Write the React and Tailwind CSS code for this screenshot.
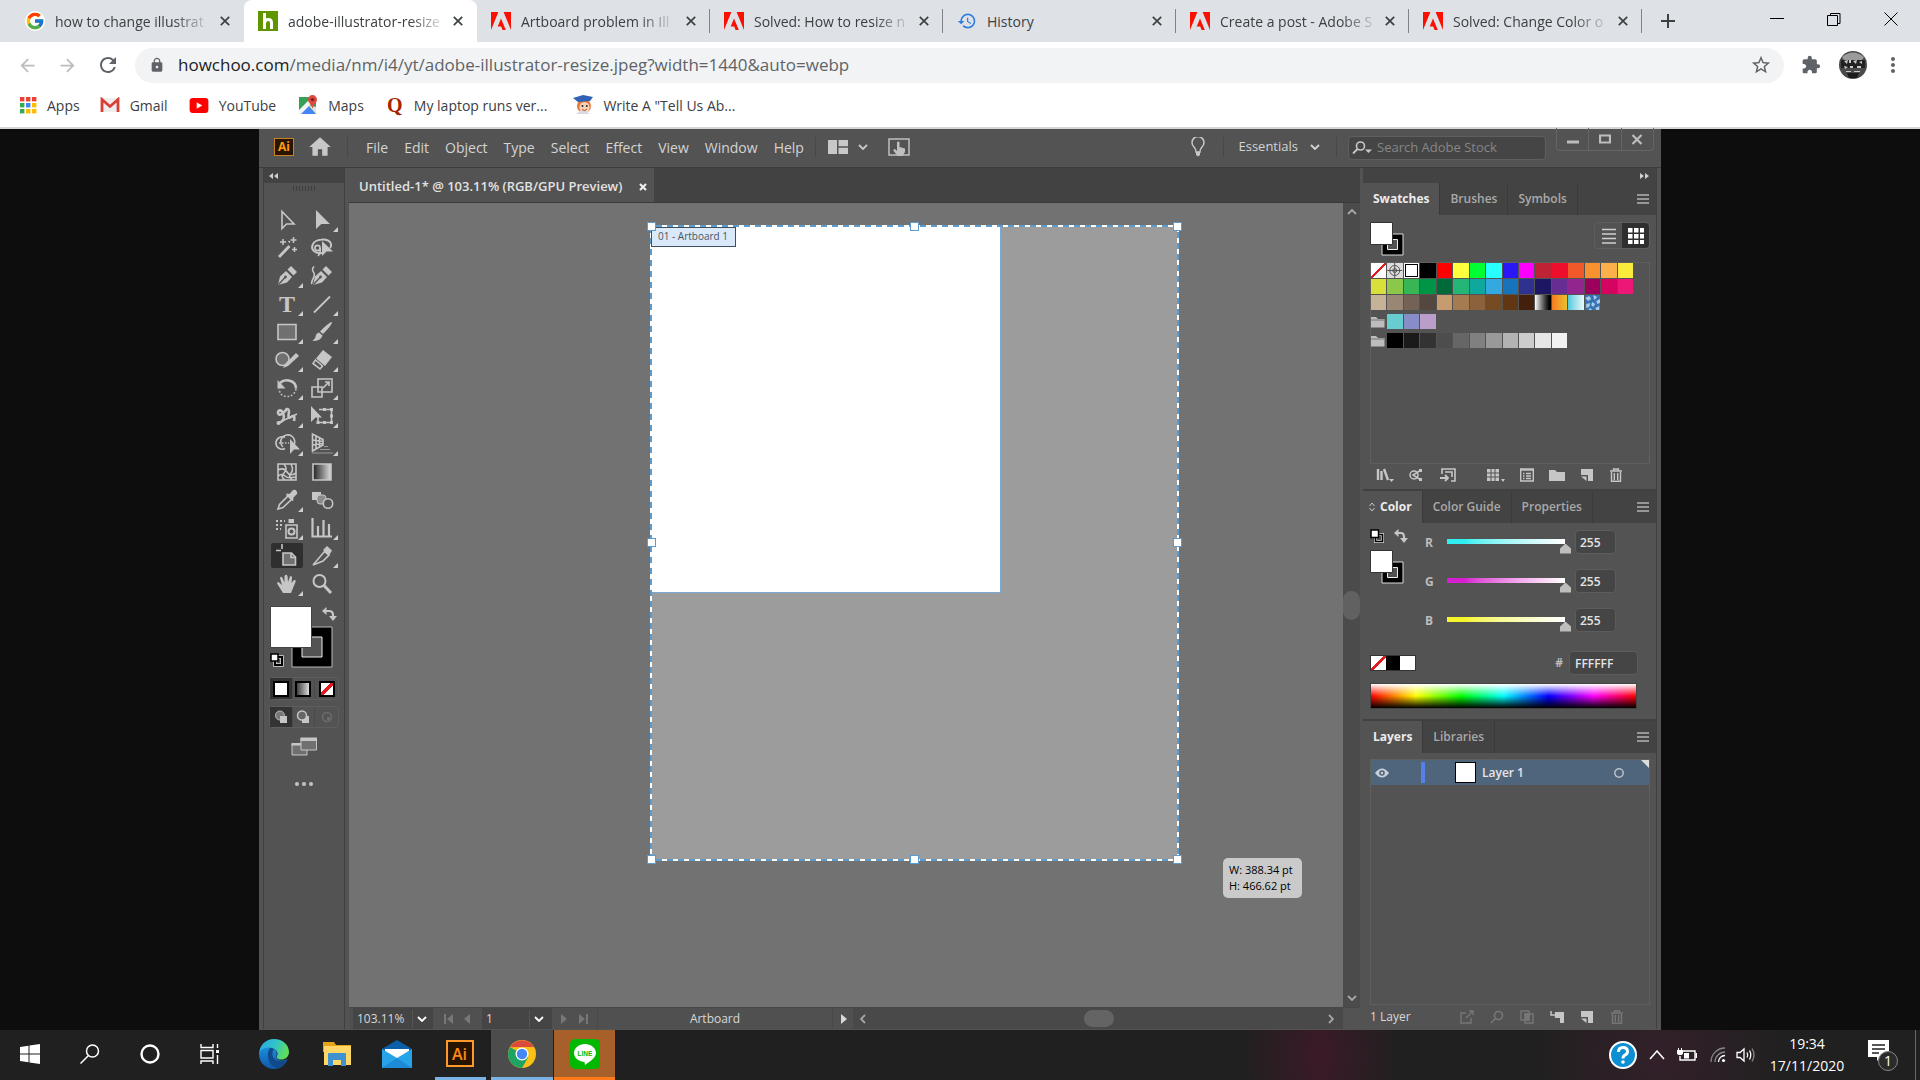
import React, { useState } from 'react';
import { FcGoogle } from 'react-icons/fc';
import { MdArrowBack, MdArrowForward, MdRefresh, MdLock, MdStarBorder, MdExtension, MdMoreVert, MdHistory, MdHome } from 'react-icons/md';

const AdobeLogo = () => (
  <svg viewBox="0 0 20 18" className="w-5 h-[18px] shrink-0">
    <path fill="#fa0f00" d="M0 0H7.4L0 18ZM12.6 0H20V18ZM10 6.6L14.8 18H11.6L10.2 14.4H6.7Z" />
  </svg>
);

const HowchooLogo = () => (
  <svg viewBox="0 0 20 20" className="w-5 h-5 shrink-0">
    <path d="M0 0H20V20H0Z" fill="#5f9500" />
    <path d="M6.500 2V18M6.500 12Q7 8.500 10.500 8.500Q13.500 8.500 13.500 12V18" fill="none" stroke="#fff" strokeWidth="3" />
  </svg>
);

const tabs = [
  { title: 'how to change illustrat', icon: <FcGoogle className="w-5 h-5 shrink-0 rounded-full bg-white" /> },
  { title: 'adobe-illustrator-resize', icon: <HowchooLogo />, active: true },
  { title: 'Artboard problem in Ill', icon: <AdobeLogo /> },
  { title: 'Solved: How to resize n', icon: <AdobeLogo /> },
  { title: 'History', icon: <MdHistory className="w-5 h-5 shrink-0 text-[#2f7de1]" />, short: true },
  { title: 'Create a post - Adobe S', icon: <AdobeLogo /> },
  { title: 'Solved: Change Color o', icon: <AdobeLogo /> },
];

const Cross = ({ className }) => (
  <svg viewBox="0 0 10 10" className={className}>
    <path d="M0.8 0.8L9.2 9.2M9.2 0.8L0.8 9.2" stroke="currentColor" strokeWidth="1.7" fill="none" />
  </svg>
);

const TabStrip = () => (
  <div className="flex h-[42px] bg-[#dee1e6] pl-[11px]">
    {tabs.map((tab, i) => (
      <div key={tab.title} className={`flex items-center justify-between w-[233px] pl-[14px] ${i > 1 ? '' : 'pr-[14px]'} ${tab.active ? 'bg-white rounded-t-lg' : ''}`}>
        <div className="flex items-center gap-[10px]">
          {tab.icon}
          <span className={`text-[14px] whitespace-nowrap text-[#3c4043] ${tab.short ? '' : '[mask-image:linear-gradient(to_right,black_80%,#0003)]'}`}>{tab.title}</span>
        </div>
        <div className="flex items-center gap-[13px]">
          <button aria-label="Close tab" className="text-[#3c4043]"><Cross className="w-[10px] h-[10px]" /></button>
          {i > 1 && <span className="w-px h-6 bg-[#80838a]" />}
        </div>
      </div>
    ))}
    <button aria-label="New tab" className="ml-[18px] text-[#3c4043]">
      <svg viewBox="0 0 16 16" className="w-4 h-4"><path d="M8 1V15M1 8H15" stroke="currentColor" strokeWidth="2" /></svg>
    </button>
    <div className="ml-auto mr-[22px] mb-1 flex items-center gap-[43px] text-black">
      <button aria-label="Minimize"><svg viewBox="0 0 14 14" className="w-[14px] h-[14px]"><path d="M0 6.5H14" stroke="currentColor" /></svg></button>
      <button aria-label="Restore"><svg viewBox="0 0 14 14" className="w-[14px] h-[14px]" fill="none" stroke="currentColor"><path d="M0.5 3.5H10.5V13.5H0.5ZM3.5 3.5V1.5H13V11.5H10.5" /></svg></button>
      <button aria-label="Close"><svg viewBox="0 0 14 14" className="w-[14px] h-[14px]" fill="none" stroke="currentColor"><path d="M0.5 0.5L13.5 13.5M13.5 0.5L0.5 13.5" /></svg></button>
    </div>
  </div>
);

const Toolbar = () => (
  <div className="flex items-center h-[46px] pl-[17px] pr-[15px] bg-white text-[#5f6368]">
    <button aria-label="Back" className="w-5 text-[#babcbe]"><MdArrowBack className="w-[21px] h-[21px]" /></button>
    <button aria-label="Forward" className="w-5 ml-5 text-[#babcbe]"><MdArrowForward className="w-[21px] h-[21px]" /></button>
    <button aria-label="Reload" className="w-6 ml-[19px]"><MdRefresh className="w-6 h-6" /></button>
    <div className="flex-1 flex items-center h-[35px] ml-[15px] pl-[14px] pr-3 rounded-full bg-[#f1f3f4]">
      <MdLock className="w-4 h-4" />
      <p className="ml-[13px] flex-1 text-[17px] whitespace-nowrap"><span className="text-[#202124]">howchoo.com</span>/media/nm/i4/yt/adobe-illustrator-resize.jpeg?width=1440&amp;auto=webp</p>
      <button aria-label="Bookmark"><MdStarBorder className="w-[22px] h-[22px]" /></button>
    </div>
    <button aria-label="Extensions" className="ml-[17px]"><MdExtension className="w-5 h-5" /></button>
    <button aria-label="Profile" className="ml-[18px]">
      <svg viewBox="0 0 28 28" className="w-7 h-7">
        <circle cx="14" cy="14" r="14" fill="#4a4a4a" />
        <path d="M3 6Q14 -3 25 6L23 9H5Z" fill="#9b9b9b" />
        <path d="M2 9H26V17H2Z" fill="#222" />
        <path d="M5 10L9 9L8 13ZM10 9H12V12H10ZM14 10L18 9L17 13ZM20 11L23 10V13ZM5 15L9 16L6 18ZM11 15H14V17H11ZM18 15H22V17H18ZM7 20H12V21H7ZM15 20H21V21H15Z" fill="#c8c8c8" />
        <path d="M8 22H20L18 27H10Z" fill="#1b1b1b" />
      </svg>
    </button>
    <button aria-label="Menu" className="ml-[14px]"><MdMoreVert className="w-6 h-6" /></button>
  </div>
);

const appsColors = ['#ea4335', '#ea4335', '#ea4335', '#34a853', '#4285f4', '#fbbc04', '#34a853', '#fbbc04', '#fbbc04'];

const bookmarks = [
  {
    name: 'Apps', gap: 'mr-[20px]',
    icon: <svg viewBox="0 0 17 17" className="w-[17px] h-[17px]">{appsColors.map((c, i) => <rect key={i} x={(i % 3) * 6} y={Math.floor(i / 3) * 6} width="4.4" height="4.4" fill={c} />)}</svg>,
  },
  {
    name: 'Gmail', gap: 'mr-[21px]',
    icon: <svg viewBox="0 0 20 16" className="w-5 h-4"><path d="M1 1H19V15H1Z" fill="#eee" /><path d="M2 15V2.5L10 9.5L18 2.5V15" fill="none" stroke="#d93f35" strokeWidth="2.8" /></svg>,
  },
  {
    name: 'YouTube', gap: 'mr-[22px]',
    icon: <svg viewBox="0 0 20 16" className="w-5 h-[15px]"><rect width="20" height="16" rx="3.5" fill="#f00" /><path d="M7.5 4.5V11.5L13.5 8Z" fill="#fff" /></svg>,
  },
  {
    name: 'Maps', gap: 'mr-[22px]',
    icon: (
      <svg viewBox="0 0 20 20" className="w-5 h-5">
        <path d="M1 2H18V19H1Z" fill="#35a057" />
        <path d="M1 19L9.5 10.5L18 19Z" fill="#4487f4" /><path d="M1 15L12 4L15 7L3 19H1Z" fill="#f4f4f4" /><path d="M18 19V12L10 10Z" fill="#dfe3e6" />
        <path d="M14.5 0A4.6 4.6 0 0 1 19 4.6C19 8 15.5 9 14.5 14C13.5 9 10 8 10 4.6A4.6 4.6 0 0 1 14.5 0Z" fill="#dd4b3e" /><circle cx="14.5" cy="4.6" r="1.7" fill="#7c1f17" />
      </svg>
    ),
  },
  {
    name: 'My laptop runs ver...', gap: 'mr-[26px]',
    icon: <span className="w-[18px] text-center font-['Liberation_Serif',serif] font-bold text-[20px] leading-none text-[#a82400]">Q</span>,
  },
  {
    name: 'Write A "Tell Us Ab...', gap: '',
    icon: (
      <svg viewBox="0 0 20 20" className="w-5 h-5">
        <circle cx="11" cy="11" r="7" fill="#e8743b" /><ellipse cx="11.5" cy="12.5" rx="5" ry="5.5" fill="#f9d5b5" />
        <path d="M0 3L10 0L20 2L17 6L5 7Z" fill="#2f62b4" /><path d="M3 19H17L13 16H7Z" fill="#d8dbe6" />
        <circle cx="9.5" cy="11" r="1" fill="#222" /><circle cx="13.8" cy="11" r="1" fill="#222" /><path d="M9 14.5Q12 17 14 14" stroke="#b5442c" fill="none" />
      </svg>
    ),
  },
];

const Bookmarks = () => (
  <nav className="flex items-center h-[39px] pl-5 pb-[5px] bg-white text-[14px] text-[#3c4043]">
    {bookmarks.map((b) => (
      <a key={b.name} href="#" className={`flex items-center gap-[10px] whitespace-nowrap ${b.gap}`}>
        {b.icon}{b.name}
      </a>
    ))}
  </nav>
);

const Chevron = ({ className = '' }) => (
  <svg viewBox="0 0 10 6" className={`w-[10px] h-[6px] ${className}`}><path d="M1 1L5 5L9 1" fill="none" stroke="currentColor" strokeWidth="1.8" /></svg>
);

const MenuBar = () => (
  <header className="flex items-center h-[39px] pl-[15px] pb-[2px] bg-[#535353] text-[14px] text-[#d4d4d4] border-b border-[#3c3c3c]">
    <span className="flex items-center justify-center w-5 h-[18px] border border-[#c98122] bg-[#2a1400] text-[12px] font-bold text-[#ff9a12]">Ai</span>
    <button aria-label="Home" className="ml-[13px] text-[#c8c8c8]"><MdHome className="w-[26px] h-[26px]" /></button>
    <span className="ml-[14px] mr-[18px] w-px h-5 bg-[#484848]" />
    <div className="flex gap-4">
      {['File', 'Edit', 'Object', 'Type', 'Select', 'Effect', 'View', 'Window', 'Help'].map((item) => <button key={item}>{item}</button>)}
    </div>
    <span className="ml-[11px] mr-[12px] w-px h-5 bg-[#484848]" />
    <button aria-label="Arrange documents" className="flex items-center gap-[10px] text-[#c8c8c8]">
      <svg viewBox="0 0 20 14" className="w-5 h-[14px]"><path d="M0 0H9V14H0ZM10.5 0H20V6.3H10.5ZM10.5 7.7H20V14H10.5Z" fill="currentColor" /></svg>
      <Chevron />
    </button>
    <button aria-label="Touch workspace" className="ml-[20px] text-[#c0c0c0]">
      <svg viewBox="0 0 22 18" className="w-[22px] h-[18px]">
        <path d="M1 1H21V17H1Z" fill="none" stroke="currentColor" strokeWidth="1.5" />
        <path d="M9 4Q10.500 3 11.500 4V9L17 10.500V14L14.500 18H9.500L5 12L7 11L9 13Z" fill="currentColor" />
      </svg>
    </button>
    <div className="ml-auto flex items-center">
      <button aria-label="Learn">
        <svg viewBox="0 0 14 20" className="w-[14px] h-5"><path d="M5 15Q5 12 3 10A6 6 0 1 1 11 10Q9 12 9 15Z" fill="none" stroke="#c8c8c8" strokeWidth="1.5" /><path d="M5 15H9V18L7 19.500L5 18Z" fill="#c8c8c8" /></svg>
      </button>
      <span className="ml-[18px] mr-[14px] w-px h-5 bg-[#484848]" />
      <button className="flex items-center gap-[12px] text-[13px]">Essentials <Chevron /></button>
      <span className="ml-[16px] mr-[11px] w-px h-5 bg-[#484848]" />
      <label className="flex items-center w-[198px] h-6 mt-[2px] px-[3px] rounded border border-[#5e5e5e] bg-[#454545]">
        <svg viewBox="0 0 20 14" className="w-5 h-[14px] shrink-0"><circle cx="8.500" cy="5" r="4" fill="none" stroke="#c8c8c8" strokeWidth="1.600" /><path d="M5.500 8L1 12.500" stroke="#c8c8c8" strokeWidth="1.800" /><path d="M13 8.500H20L16.500 12Z" fill="#c8c8c8" /></svg>
        <input aria-label="Search Adobe Stock" placeholder="Search Adobe Stock" className="ml-[5px] w-full bg-transparent text-[13px] outline-none placeholder:text-[#858585]" />
      </label>
      <div className="flex self-start -mt-[6px] ml-[10px] mr-[7px] w-[98px] h-[23px] border border-t-0 border-[#656565] rounded-b divide-x divide-[#656565]">
        <button aria-label="Minimize window" className="flex-1 flex justify-center items-center"><svg viewBox="0 0 12 10" className="w-3 h-[10px]"><path d="M0 8H12" stroke="#bdbdbd" strokeWidth="3" /></svg></button>
        <button aria-label="Maximize window" className="flex-1 flex justify-center items-center"><svg viewBox="0 0 12 10" className="w-3 h-[10px]"><path d="M1 1.500H11V8.500H1Z" fill="none" stroke="#bdbdbd" strokeWidth="2.200" /></svg></button>
        <button aria-label="Close window" className="flex-1 flex justify-center items-center"><svg viewBox="0 0 12 10" className="w-3 h-[11px]"><path d="M1.500 0.500L10.500 9.500M10.500 0.500L1.500 9.500" stroke="#bdbdbd" strokeWidth="2.200" /></svg></button>
      </div>
    </div>
  </header>
);

const F = '#c6c6c6';
const L = { fill: 'none', stroke: '#c6c6c6', strokeWidth: 1.6 };
const nib = <><path d="M2 20L4 11.500L10 6L16 12L11 17.500Z" fill={F} /><path d="M11.500 4.500L15 1L21 7L17.500 10.500Z" fill={F} /><path d="M2.500 19.500L9 12.500" stroke="#535353" strokeWidth="1.300" /><circle cx="9.500" cy="12" r="1.400" fill="#535353" /></>;

const tools = [
  { name: 'Selection', art: <path d="M6 2.500V19.500L10.500 15H18Z" {...L} /> },
  { name: 'Direct Selection', more: true, art: <path d="M5 1V20L10.300 15H19Z" fill={F} /> },
  { name: 'Magic Wand', art: <><path d="M3 20L13.500 9" {...L} strokeWidth="2.800" /><path d="M7 2V8M4 5H10M17.500 0V6M14.500 3H20.500M18.500 10V15M16 12.500H21M12.500 4L14 5.500" {...L} strokeWidth="1.500" /></> },
  { name: 'Lasso', art: <><path d="M11 16C3 17 0 12 1.500 8C4 1 18 1 20 7C20.500 9 20 10 19 11" {...L} strokeWidth="2" /><circle cx="6.500" cy="11" r="2.600" {...L} /><path d="M9 11Q10 16 7 19" {...L} /><path d="M11 4V19L15.500 14.500H22Z" fill={F} /></> },
  { name: 'Pen', more: true, art: nib },
  { name: 'Curvature', art: <><g>{nib}</g><path d="M1 19C-1 16 5 12 3 8C2 6 0 5 3 1.500" {...L} /></> },
  { name: 'Type', more: true, art: <text x="11" y="19" textAnchor="middle" fontFamily="Liberation Serif, serif" fontWeight="bold" fontSize="24" fill={F}>T</text> },
  { name: 'Line Segment', more: true, art: <path d="M3 19.500L19 3.500" {...L} strokeWidth="1.800" /> },
  { name: 'Rectangle', more: true, art: <path d="M2 3.500H20V18.500H2Z" {...L} fill="#707070" /> },
  { name: 'Paintbrush', more: true, art: <><path d="M21 1Q21 4 12 13L9 10.500Q18 1 21 1Z" fill={F} /><path d="M8 11.500L11.500 14.500Q10 20 1.500 20Q5 17 5 14Q6 11.500 8 11.500Z" fill={F} /></> },
  { name: 'Shaper', more: true, art: <><circle cx="6.500" cy="10" r="6.500" {...L} fill="#707070" /><path d="M7 19L9 15L20 4L23 7L12 17Z" fill={F} /></> },
  { name: 'Eraser', more: true, art: <><path d="M12 1L21 8L14 17L5 9.500Z" fill={F} /><path d="M4.500 11L11.500 17L9 20L2 14.500Z" {...L} /></> },
  { name: 'Rotate', more: true, art: <><path d="M4 6C9 1 20 3 20 11.500" {...L} strokeWidth="2.600" /><path d="M1.500 3V11.500H9.500Z" fill={F} /><path d="M20 12A9 9 0 0 1 4 16L3 12" {...L} strokeDasharray="1.600 1.900" /></> },
  { name: 'Scale', more: true, art: <><path d="M7 2H21V15H7ZM1 10H11V20H1Z" {...L} /><path d="M12 11L18 5M14 5H18V9" {...L} /></> },
  { name: 'Width', more: true, art: <><path d="M2 18C8 17 9 12 7 8C5 4 2 5 2 8C3 12 8 8 10 5C11 3 13 4 13 7C12 12 12 14 15 12C18 10 19 11 18 16" {...L} strokeWidth="2.600" /><path d="M2 18L21 9" {...L} /><circle cx="2.500" cy="18" r="2" fill={F} /></> },
  { name: 'Free Transform', more: true, art: <><path d="M0 1V17L4.500 12.500H11Z" fill={F} /><path d="M8 4.500H20.500V17.500H7V12" {...L} /><path d="M19 3H22V6H19ZM19 16H22V19H19ZM5.500 16H8.500V19H5.500ZM12 3H15V6H12ZM12 16H15V19H12ZM19 9.500H22V12.500H19Z" fill={F} /></> },
  { name: 'Shape Builder', more: true, art: <><path d="M9 15.500A6.200 6.200 0 1 1 9 4.500M7 14A7 7 0 1 1 18 12" {...L} /><path d="M3 10H13" {...L} strokeDasharray="1.500 1.500" /><path d="M14 6V21L18 16.500H24Z" fill={F} /></> },
  { name: 'Perspective Grid', more: true, art: <><path d="M1.500 1V18L12 12V6.500ZM5 3V16M8.500 4.500V14M1.500 7L12 8.500M1.500 12L12 10.500" {...L} /><path d="M1 20H22M9 16.500H19M13 13.500H17" {...L} strokeWidth="1.200" stroke="#999" /></> },
  { name: 'Mesh', art: <><path d="M2 3H20V19H2Z" {...L} /><path d="M2 9Q8 6 11 11T20 12M8 3Q12 8 8 12T9 19M15 3Q18 9 15 12T16 19M2 15Q6 12 9 15T20 16" {...L} /></> },
  { name: 'Gradient', art: <><defs><linearGradient id="toolGrad"><stop stopColor="#222" /><stop offset="1" stopColor="#ddd" /></linearGradient></defs><path d="M2 3H20V19H2Z" {...L} fill="url(#toolGrad)" /></> },
  { name: 'Eyedropper', more: true, art: <><path d="M2 20L3.500 15.500L13 6L16.500 9.500L7 18.500Z" {...L} /><path d="M11 4.500L13.500 5L17 1Q20 0 21 3Q22 5 20 6L17 9L17.500 11.500L16 12L10 6Z" fill={F} /></> },
  { name: 'Blend', art: <><path d="M1 3H10V11H1Z" fill={F} /><rect x="6" y="6" width="9" height="9" rx="3" fill="#8b8b8b" stroke={F} /><circle cx="17" cy="14.500" r="4.700" {...L} fill="#535353" /></> },
  { name: 'Symbol Sprayer', more: true, art: <><path d="M10 8H21V21H10Z" {...L} /><path d="M12.500 6V2H18V6Z" fill={F} /><circle cx="15.500" cy="14.500" r="3" {...L} strokeWidth="2" /><path d="M0 4H9M0 8H7M0 12H5" {...L} strokeWidth="2" strokeDasharray="2 2" /></> },
  { name: 'Column Graph', more: true, art: <path d="M1.500 1V19.500H21M7 19V9M12.500 19V3M18 19V7" {...L} strokeWidth="2.200" /> },
  { name: 'Artboard', selected: true, art: <><path d="M7 8H15.500L19.500 12V20H7Z" {...L} fill="#707070" /><path d="M0 5.500H5M6 -1V4M15 8V12.500H19.500" {...L} /></> },
  { name: 'Slice', more: true, art: <><path d="M2 20L13.500 6.500L18 10L12 16Z" {...L} /><path d="M12 5L16 1L21 5.500L18 10.500Z" fill={F} /></> },
  { name: 'Hand', more: true, art: <path d="M7 20L2 12Q0 9 2.500 9L6 12L4 5Q5 2.500 6.500 5L8.500 9.500L8.500 3Q10 0.500 11.500 3L12 9L14 3.500Q16 2 16 4.500L15.500 10L18 7Q20.500 6.500 19.500 9L15 20Z" fill={F} /> },
  { name: 'Zoom', art: <><circle cx="8.500" cy="8" r="6" {...L} strokeWidth="2" /><path d="M13 12.500L20 20" {...L} strokeWidth="3" /></> },
];

const MiniDefault = () => (
  <svg viewBox="0 0 14 14" className="w-[14px] h-[14px]"><path d="M5.500 5.500H12.500V12.500H5.500Z" fill="none" stroke="#ddd" strokeWidth="3" /><path d="M5.500 5.500H12.500V12.500H5.500Z" fill="none" stroke="#000" strokeWidth="1.600" /><path d="M1 1H8.500V8.500H1Z" fill="#fff" stroke="#000" strokeWidth="1.500" /></svg>
);

const SwapIcon = () => (
  <svg viewBox="0 0 14 14" className="w-[14px] h-[14px]"><path d="M3 4H7Q10 4 10 8V10" fill="none" stroke={F} strokeWidth="2.200" /><path d="M0 4L4.500 0V8ZM6 9H14L10 14Z" fill={F} /></svg>
);

// small fill-over-stroke proxy used by Swatches and Color
const FillStroke = () => (
  <svg viewBox="0 0 34 34" className="w-[34px] h-[34px]">
    <path d="M12 12H33V33H12Z" fill="#000" stroke="#ddd" />
    <path d="M17.500 17.500H27.500V27.500H17.500Z" fill="#535353" stroke="#eee" />
    <path d="M0.500 0.500H22.500V22.500H0.500Z" fill="#fff" stroke="#333" />
  </svg>
);

const ToolsPanel = () => (
  <aside className="w-[82px] shrink-0 bg-[#535353] border-x border-[#404040]">
    <div className="flex items-center h-[15px] pl-[5px] bg-[#434343]">
      <svg viewBox="0 0 10 6" className="w-[10px] h-[6px]"><path d="M4 0V6L0 3ZM9 0V6L5 3Z" fill="#d0d0d0" /></svg>
    </div>
    <div className="mx-auto mt-[3px] w-[23px] h-[5px] bg-[repeating-linear-gradient(90deg,#3e3e3e_0_1px,#535353_1px_3px)]" />
    <div className="mt-4 ml-[7px] grid grid-cols-[32px_32px] gap-[3px]">
      {tools.map((t) => (
        <button key={t.name} aria-label={t.name} className={`relative flex items-center justify-center w-8 h-[25px] rounded-xs ${t.selected ? 'bg-[#2f2f2f]' : ''}`}>
          <svg viewBox="0 0 22 22" className="w-[22px] h-[22px] overflow-visible">{t.art}</svg>
          {t.more && <span className="absolute right-0 bottom-0 w-[5px] h-[5px] bg-[#cfcfcf] [clip-path:polygon(100%_0,100%_100%,0_100%)]" />}
        </button>
      ))}
    </div>
    <svg viewBox="0 0 74 64" className="mt-[9px] ml-[6px] w-[74px] h-16">
      <path d="M22 22H62V62H22Z" fill="#000" stroke="#bbb" />
      <path d="M32 32H52V52H32Z" fill="#535353" stroke="#eee" />
      <path d="M0.500 1.500H41.500V42.500H0.500Z" fill="#fff" stroke="#444" />
      <path d="M55 6H59Q63 6 63 10V12" fill="none" stroke={F} strokeWidth="2.200" /><path d="M52 6L56.500 2V10ZM59 11H67L63 16Z" fill={F} />
      <path d="M5 52H12V60H5Z" fill="none" stroke="#ddd" strokeWidth="3.500" /><path d="M5 52H12V60H5Z" fill="none" stroke="#000" strokeWidth="2" /><path d="M1 49H8V56H1Z" fill="#fff" stroke="#000" strokeWidth="1.500" />
    </svg>
    <div className="mt-2 ml-[5px] w-[70px] h-[23px] grid grid-cols-3 divide-x divide-[#4a4a4a] border border-[#5e5e5e] rounded-sm">
      <button aria-label="Color" className="flex items-center justify-center bg-[#333]"><span className="w-4 h-4 bg-white border-2 border-black" /></button>
      <button aria-label="Gradient fill" className="flex items-center justify-center"><span className="w-4 h-4 border-2 border-black bg-linear-to-r from-[#444] to-[#ddd]" /></button>
      <button aria-label="None" className="flex items-center justify-center"><span className="w-4 h-4 border-2 border-black bg-[linear-gradient(135deg,#fff_38%,#e01b24_38%_62%,#fff_62%)]" /></button>
    </div>
    <div className="mt-[6px] ml-[5px] w-[70px] h-[22px] grid grid-cols-3 divide-x divide-[#4a4a4a] border border-[#5e5e5e] rounded-sm">
      <button aria-label="Draw normal" className="flex items-center justify-center bg-[#333]"><svg viewBox="0 0 14 14" className="w-[14px] h-[14px]"><circle cx="6" cy="5.500" r="4.500" fill="#777" stroke="#bbb" /><path d="M6 6H13V13H6Z" fill={F} /></svg></button>
      <button aria-label="Draw behind" className="flex items-center justify-center"><svg viewBox="0 0 14 14" className="w-[14px] h-[14px]"><path d="M6 6H13V13H6Z" fill={F} /><circle cx="6" cy="5.500" r="4.500" fill="#666" stroke={F} strokeWidth="1.500" /></svg></button>
      <button aria-label="Draw inside" className="flex items-center justify-center"><svg viewBox="0 0 14 14" className="w-[14px] h-[14px]"><circle cx="7" cy="7" r="4.500" fill="none" stroke="#6c6c6c" strokeWidth="1.500" /><path d="M7 7H10V10H7Z" fill="#6c6c6c" /></svg></button>
    </div>
    <button aria-label="Change screen mode" className="block mx-auto mt-[9px]">
      <svg viewBox="0 0 26 19" className="w-[26px] h-[19px]"><path d="M1 7H16V18H1Z" fill="#707070" stroke={F} /><path d="M0.500 6H12V8.500H0.500Z" fill={F} /><path d="M10 1.500H25.500V13H10Z" fill="#707070" stroke={F} /><path d="M9.500 0.500H26V4H9.500Z" fill={F} /></svg>
    </button>
    <button aria-label="Edit toolbar" className="flex gap-[3px] mx-auto mt-[26px]">
      <span className="w-1 h-1 rounded-full bg-[#c6c6c6]" /><span className="w-1 h-1 rounded-full bg-[#c6c6c6]" /><span className="w-1 h-1 rounded-full bg-[#c6c6c6]" />
    </button>
  </aside>
);

const handles = [
  'left-[-4px] top-[-4px]', 'left-[259px] top-[-4px]', 'left-[522px] top-[-4px]',
  'left-[-4px] top-[312px]', 'left-[522px] top-[312px]',
  'left-[-4px] top-[629px]', 'left-[259px] top-[629px]', 'left-[522px] top-[629px]',
];

const Canvas = () => (
  <div className="relative flex-1 bg-[#727272] overflow-hidden">
    <div className="absolute left-[302px] top-[23px] w-[527px] h-[634px] bg-[#9c9c9c]">
      <div className="absolute left-0 top-0 w-[350px] h-[367px] bg-white border-r border-b border-[#79a9d6]" />
      <svg className="absolute left-0 top-0 w-full h-full overflow-visible">
        <rect width="527" height="634" fill="none" stroke="#5b9bd0" strokeWidth="2" />
        <rect width="527" height="634" fill="none" stroke="#fff" strokeWidth="2" strokeDasharray="5 6" />
      </svg>
      <span className="absolute left-0 top-px w-[85px] h-5 px-[6px] border border-[#3f4f60] bg-[#d9e9fa] text-[10px] leading-[16px] text-[#4a5560] whitespace-nowrap">01 - Artboard 1</span>
      {handles.map((pos) => <span key={pos} className={`absolute w-[9px] h-[9px] bg-white border border-[#5b9bd0] ${pos}`} />)}
    </div>
    <div className="absolute left-[874px] top-[655px] w-[79px] h-10 pl-[6px] pt-1 rounded-[5px] bg-[#cacaca] text-[11px] leading-[16px] text-black whitespace-nowrap">
      <p>W: 388.34 pt</p>
      <p>H: 466.62 pt</p>
    </div>
  </div>
);

const StatusBar = () => (
  <footer className="flex items-center h-[22px] bg-[#505050] border-t border-[#484848] text-[12px] text-[#d8d8d8]">
    <div className="flex items-center ml-1 w-20 h-full bg-[#454545]">
      <input aria-label="Zoom level" defaultValue="103.11%" className="w-[60px] pl-1 bg-transparent border-r border-[#555]" />
      <Chevron className="ml-[4px] text-white" />
    </div>
    <button aria-label="First artboard" className="ml-[11px] text-[#777]"><svg viewBox="0 0 10 10" className="w-[10px] h-[10px]"><path d="M0 0H2V10H0ZM9 0V10L3 5Z" fill="currentColor" /></svg></button>
    <button aria-label="Previous artboard" className="ml-[10px] text-[#777]"><svg viewBox="0 0 6 10" className="w-[6px] h-[10px]"><path d="M6 0V10L0 5Z" fill="currentColor" /></svg></button>
    <div className="flex items-center ml-3 w-[70px] h-full bg-[#454545]">
      <input aria-label="Artboard number" defaultValue="1" className="w-[48px] pl-1 bg-transparent border-r border-[#555]" />
      <Chevron className="ml-[4px] text-white" />
    </div>
    <button aria-label="Next artboard" className="ml-[9px] text-[#777]"><svg viewBox="0 0 6 10" className="w-[6px] h-[10px]"><path d="M0 0V10L6 5Z" fill="currentColor" /></svg></button>
    <button aria-label="Last artboard" className="ml-[11px] text-[#777]"><svg viewBox="0 0 10 10" className="w-[10px] h-[10px]"><path d="M8 0H10V10H8ZM1 0V10L7 5Z" fill="currentColor" /></svg></button>
    <div className="flex items-center justify-center ml-[9px] w-[236px] h-full border-x border-[#484848]">Artboard</div>
    <button aria-label="Status options" className="ml-[8px]"><svg viewBox="0 0 6 10" className="w-[6px] h-[10px]"><path d="M0 0V10L6 5Z" fill="#d8d8d8" /></svg></button>
    <div className="flex-1 flex items-center ml-[6px] h-full px-[5px] bg-[#494949] text-[#a5a5a5]">
      <Chevron className="rotate-90" />
      <span className="ml-[45%] w-[30px] h-[17px] rounded-full bg-[#646464]" />
      <Chevron className="ml-auto mr-[2px] -rotate-90" />
    </div>
    <span className="w-[17px] h-full bg-[#535353]" />
  </footer>
);

const PanelTabs = ({ names, handle }) => (
  <div className="flex h-[32px] bg-[#434343] text-[12px] font-semibold text-[#a9a9a9]">
    {names.map((n, i) => (
      <button key={n} className={`flex items-center px-[10px] border-r border-[#3a3a3a] ${i === 0 ? 'bg-[#535353] font-bold text-[#ececec]' : ''}`}>
        {handle && i === 0 && <svg viewBox="0 0 6 10" className="-ml-1 mr-[5px] w-[6px] h-[10px]"><path d="M0.500 4L3 1L5.500 4M0.500 6L3 9L5.500 6" fill="none" stroke={F} /></svg>}
        {n}
      </button>
    ))}
    <button aria-label="Panel menu" className="ml-auto mr-[7px]">
      <svg viewBox="0 0 12 10" className="w-3 h-[10px]"><path d="M0 1H12M0 5H12M0 9H12" stroke="#b4b4b4" strokeWidth="1.300" /></svg>
    </button>
  </div>
);

const swatchRows = [
  ['#000', '#f00', '#ffff3d', '#00ff33', '#28ffff', '#2917f5', '#f0f', '#bd2334', '#ec0e2a', '#f1592a', '#f7922f', '#fbb04b', '#fbeb3b'],
  ['#d9e03b', '#8bc749', '#38b554', '#009447', '#006a38', '#25b577', '#0ea99c', '#33a9e0', '#1773ba', '#2f318f', '#1c1663', '#672d90', '#93258f', '#9c005c', '#d40560', '#ed1778'],
  ['#c6b199', '#998675', '#746257', '#534740', '#c69b6d', '#a57b52', '#8b623b', '#754b24', '#603613', '#42200b'],
];

const swatchGroups = [
  ['#68cdd0', '#868dc7', '#bb9dca'],
  ['#000', '#1a1a1a', '#333', '#4d4d4d', '#666', '#808080', '#999', '#b3b3b3', '#ccc', '#e6e6e6', '#f2f2f2'],
];

const Folder = () => <svg viewBox="0 0 14 12" className="w-[14px] h-3 self-center"><path d="M0 1H5L7 3H13.500V11.500H0Z" fill="#bdbdbd" /><path d="M0 4H13.500" stroke="#777" /></svg>;

const none = 'bg-[linear-gradient(135deg,#fff_44%,#e01b24_44%_56%,#fff_56%)]';

const SwatchesPanel = () => (
  <section className="flex flex-col h-[308px] border-b-2 border-[#404040]">
    <PanelTabs names={['Swatches', 'Brushes', 'Symbols']} />
    <div className="flex justify-between pl-[7px] pr-[6px] pt-[7px]">
      <FillStroke />
      <div className="flex w-[56px] h-[27px] rounded border border-[#5e5e5e]">
        <button aria-label="List view" className="flex-1 flex items-center justify-center"><svg viewBox="0 0 14 16" className="w-[14px] h-4"><path d="M0 1.500H14M0 6H14M0 10.500H14M0 15H14" stroke="#d0d0d0" strokeWidth="1.600" /></svg></button>
        <button aria-label="Grid view" className="flex-1 flex items-center justify-center rounded-r bg-[#2f2f2f]"><svg viewBox="0 0 16 16" className="w-4 h-4"><path d="M0 0H4.500V4.500H0ZM6 0H10.500V4.500H6ZM12 0H16V4.500H12ZM0 6H4.500V10.500H0ZM6 6H10.500V10.500H6ZM12 6H16V10.500H12ZM0 12H4.500V16H0ZM6 12H10.500V16H6ZM12 12H16V16H12Z" fill="#fff" /></svg></button>
      </div>
    </div>
    <div className="flex-1 ml-[7px] mr-[6px] mt-[6px] border border-[#5f5f5f]">
      <div className="grid grid-cols-16 gap-px w-[262px] auto-rows-[15px]">
        <span className={none} />
        <svg viewBox="0 0 15 15" className="w-full h-full bg-[#ddd]"><circle cx="7.500" cy="7.500" r="5" fill="none" stroke="#555" /><circle cx="7.500" cy="7.500" r="2" fill="none" stroke="#555" /><path d="M7.500 0V15M0 7.500H15" stroke="#555" /></svg>
        <span className="bg-white border-2 border-black outline-1 -outline-offset-1 outline-white" />
        {swatchRows.flat().map((c, i) => <span key={i} style={{ backgroundColor: c }} />)}
        <span className="bg-linear-to-r from-white to-black" />
        <span className="bg-linear-to-r from-[#f47a20] to-[#e8c030]" />
        <span className="bg-linear-to-r from-[#4cc9dc] to-[#e8f8fa]" />
        <svg viewBox="0 0 15 15" className="w-full h-full bg-[#3573b3]"><path d="M0 3L4 1L6 4L3 6ZM8 0L12 2L9 5ZM11 6L15 4V8L12 9ZM1 9L5 8L4 12L1 13ZM7 7L10 9L8 12L6 10ZM10 13L14 11V15H11ZM5 13L7 15H3Z" fill="#a9cbe8" /></svg>
      </div>
      {swatchGroups.map((group, i) => (
        <div key={i} className="mt-[4px] grid grid-cols-16 gap-px w-[262px] auto-rows-[15px]">
          <Folder />
          {group.map((c) => <span key={c} style={{ backgroundColor: c }} />)}
        </div>
      ))}
    </div>
    <div className="flex items-center h-[25px] pb-[3px] pl-[13px] gap-[15px]">
      <button aria-label="Swatch libraries"><svg viewBox="0 0 18 14" className="w-[18px] h-[14px]"><path d="M2 1V12M5.500 3V12M8 1L12 12" stroke={F} strokeWidth="2.400" /><path d="M13 11H18L15.500 14Z" fill={F} /></svg></button>
      <button aria-label="Share"><svg viewBox="0 0 16 14" className="w-4 h-[14px]"><path d="M12 2L4 7L12 12" fill="none" stroke={F} strokeWidth="1.500" /><circle cx="5" cy="7" r="4" fill="none" stroke={F} strokeWidth="1.500" /><path d="M10 1H13V4H10ZM10 10H13V13H10Z" fill={F} /></svg></button>
      <button aria-label="Add to library"><svg viewBox="0 0 16 14" className="w-4 h-[14px]"><path d="M2 6V1H15V13H11M5 4H12V9" fill="none" stroke={F} strokeWidth="1.600" /><path d="M0 10H7M5 7L8 10L5 13" fill="none" stroke={F} strokeWidth="1.800" /></svg></button>
      <button aria-label="Show kinds" className="ml-[16px]"><svg viewBox="0 0 18 14" className="w-[18px] h-[14px]"><path d="M0 1H12V13H0Z" fill={F} /><path d="M4 1V13M8 1V13M0 5H12M0 9H12" stroke="#535353" /><path d="M14 11H18L16 14Z" fill={F} /></svg></button>
      <button aria-label="Swatch options"><svg viewBox="0 0 14 14" className="w-[14px] h-[14px]"><path d="M0.700 1H13.300V13H0.700Z" fill="none" stroke={F} strokeWidth="1.400" /><path d="M1 2H13M3 5.500H4.500M6 5.500H11M3 8H4.500M6 8H11M3 10.500H4.500M6 10.500H11" stroke={F} strokeWidth="1.300" /></svg></button>
      <button aria-label="New group"><svg viewBox="0 0 16 13" className="w-4 h-[13px]"><path d="M0 1H6L8 3H16V12H0Z" fill={F} /></svg></button>
      <button aria-label="New swatch"><svg viewBox="0 0 14 14" className="w-[14px] h-[14px]"><path d="M1 1H13V13H8V7H1ZM1 8.500H6.500V13Z" fill={F} /></svg></button>
      <button aria-label="Delete swatch"><svg viewBox="0 0 14 14" className="w-[14px] h-[14px]"><path d="M1 3H13M4.500 3V1H9.500V3M2.500 4V13.300H11.500V4M5.300 5V12M8.700 5V12" fill="none" stroke={F} strokeWidth="1.400" /></svg></button>
    </div>
  </section>
);

const channels = [
  { name: 'R', from: 'from-[#2feff0]' },
  { name: 'G', from: 'from-[#d61fd0]' },
  { name: 'B', from: 'from-[#f6f52a]' },
];

const Channel = ({ name, from }) => {
  const [value, setValue] = useState(255);
  return (
    <div className="flex items-center h-[24px]">
      <label htmlFor={name} className="w-4 pt-[2px] text-[12px] font-bold text-[#bcbcbc]">{name}</label>
      <input
        id={name} type="range" min="0" max="255" value={value} onChange={(e) => setValue(e.target.value)}
        className={`w-[130px] h-[15px] mt-2 appearance-none bg-linear-to-r ${from} from-15% to-white bg-[length:118px_5px] bg-[position:6px_0] bg-no-repeat [&::-webkit-slider-thumb]:appearance-none [&::-webkit-slider-thumb]:mt-[5px] [&::-webkit-slider-thumb]:w-[11px] [&::-webkit-slider-thumb]:h-[10px] [&::-webkit-slider-thumb]:bg-[#bebebe] [&::-webkit-slider-thumb]:[clip-path:polygon(50%_0,100%_50%,100%_100%,0_100%,0_50%)]`}
      />
      <input aria-label={`${name} value`} value={value} onChange={(e) => setValue(e.target.value)} className="ml-1 w-[41px] h-6 pl-1 rounded border border-[#5c5c5c] bg-[#454545] text-[12px] font-semibold text-[#e4e4e4]" />
    </div>
  );
};

const ColorPanel = () => (
  <section className="h-[230px] border-b-2 border-[#404040]">
    <PanelTabs names={['Color', 'Color Guide', 'Properties']} handle />
    <div className="flex pl-[7px] pt-[6px]">
      <div className="w-[55px]">
        <div className="flex gap-[10px] mb-[7px]"><MiniDefault /><SwapIcon /></div>
        <FillStroke />
      </div>
      <div className="flex flex-col gap-[15px] pt-px">
        {channels.map((c) => <Channel key={c.name} {...c} />)}
      </div>
    </div>
    <div className="flex items-center pl-[7px] mt-[19px]">
      <div className="flex w-[46px] h-4 border border-[#333]">
        <span className={`flex-1 ${none}`} /><span className="flex-1 bg-black" /><span className="flex-1 bg-white" />
      </div>
      <label htmlFor="hex" className="ml-auto mr-[6px] text-[12px] font-bold text-[#bcbcbc]">#</label>
      <input id="hex" defaultValue="FFFFFF" className="w-[69px] h-6 mr-[18px] pl-[5px] rounded border border-[#5c5c5c] bg-[#454545] text-[12px] font-semibold text-[#e4e4e4]" />
    </div>
    <div className="ml-[7px] mr-[19px] mt-[8px] h-[26px] border border-[#444] bg-[linear-gradient(to_bottom,#fff,transparent_50%,#000),linear-gradient(to_right,#f00,#ff0_17%,#0f0_34%,#0ff_50%,#00f_67%,#f0f_84%,#f00)]" />
  </section>
);

const LayersPanel = () => (
  <section className="flex-1 flex flex-col">
    <PanelTabs names={['Layers', 'Libraries']} />
    <div className="flex-1 ml-[7px] mr-[6px] mt-[6px] border border-[#5f5f5f]">
      <div className="relative flex items-center h-[25px] bg-[#4f657b]">
        <svg viewBox="0 0 14 10" className="ml-[4px] w-[14px] h-[10px]"><path d="M0 5Q7 -4 14 5Q7 14 0 5Z" fill="#c8d0d8" /><circle cx="7" cy="5" r="2.800" fill="#4f657b" /><circle cx="7" cy="5" r="1.200" fill="#c8d0d8" /></svg>
        <span className="ml-[32px] w-1 h-[21px] bg-[#5680e8]" />
        <span className="ml-[30px] w-[21px] h-[21px] bg-white border border-black" />
        <span className="ml-[6px] text-[12px] font-semibold text-[#e6e6e6]">Layer 1</span>
        <svg viewBox="0 0 10 10" className="ml-auto mr-[25px] w-[10px] h-[10px]"><circle cx="5" cy="5" r="4.200" fill="none" stroke="#b9c2cb" strokeWidth="1.500" /></svg>
        <span className="absolute right-0 top-0 w-2 h-2 bg-[#dcdcdc] [clip-path:polygon(0_0,100%_0,100%_100%)]" />
      </div>
    </div>
    <div className="flex items-center h-[24px] pl-[7px] pr-[32px] text-[12px] text-[#d8d8d8]">
      1 Layer
      <div className="ml-auto flex gap-4 text-[#777]">
        <svg viewBox="0 0 14 14" className="w-[14px] h-[14px]" fill="none" stroke="currentColor" strokeWidth="1.400"><path d="M6 3H1V13H11V8M6 8L13 1M9 1H13V5" /></svg>
        <svg viewBox="0 0 14 14" className="w-[14px] h-[14px]" fill="none" stroke="currentColor" strokeWidth="1.600"><circle cx="8.500" cy="5.500" r="4" /><path d="M5.500 8.500L1 13" /></svg>
        <svg viewBox="0 0 14 14" className="w-[14px] h-[14px]" fill="none" stroke="currentColor" strokeWidth="1.400"><path d="M1 1H9V10H1ZM5 4H13V13H5Z" /><path d="M5 4H9V10H5Z" fill="currentColor" /></svg>
        <svg viewBox="0 0 14 14" className="w-[14px] h-[14px]"><path d="M5 2H14V13H10V8H5Z" fill={F} /><path d="M1 1V5H7M5 2.500L7.500 5L5 7.500" fill="none" stroke={F} strokeWidth="1.500" /></svg>
        <svg viewBox="0 0 14 14" className="w-[14px] h-[14px]"><path d="M1 1H13V13H8V7H1ZM1 8.500H6.500V13Z" fill={F} /></svg>
        <svg viewBox="0 0 14 14" className="w-[14px] h-[14px]" fill="none" stroke="currentColor" strokeWidth="1.400"><path d="M1 3H13M4.500 3V1H9.500V3M2.500 4V13.300H11.500V4M5.300 5V12M8.700 5V12" /></svg>
      </div>
    </div>
  </section>
);

const Illustrator = () => (
  <div className="flex-1 flex flex-col bg-[#535353]">
    <MenuBar />
    <div className="flex-1 flex px-1 pb-px">
      <ToolsPanel />
      <div className="flex-1 flex flex-col ml-1">
        <div className="flex h-[35px] bg-[#424242] border-b border-[#3a3a3a]">
          <div className="flex items-center w-[305px] pt-[3px] pl-[10px] pr-[7px] bg-[#535353] text-[13px] font-semibold text-[#e2e2e2] whitespace-nowrap">
            Untitled-1* @ 103.11% (RGB/GPU Preview)
            <button aria-label="Close document" className="ml-auto"><svg viewBox="0 0 8 8" className="w-2 h-2"><path d="M1 1L7 7M7 1L1 7" stroke="#eee" strokeWidth="2.200" /></svg></button>
          </div>
        </div>
        <div className="flex-1 flex">
          <Canvas />
          <div className="w-[17px] flex flex-col items-center bg-[#4b4b4b] pt-[6px] pb-[6px] text-[#a5a5a5]">
            <Chevron className="rotate-180" />
            <span className="my-auto w-[17px] h-[29px] rounded-full bg-[#616161]" />
            <Chevron />
          </div>
        </div>
        <StatusBar />
      </div>
      <aside className="w-[294px] shrink-0 flex flex-col ml-[3px] border-r border-[#404040] bg-[#535353]">
        <div className="flex items-center justify-end h-[15px] pr-[7px] bg-[#434343]">
          <svg viewBox="0 0 10 6" className="w-[10px] h-[6px]"><path d="M1 0V6L5 3ZM6 0V6L10 3Z" fill="#d0d0d0" /></svg>
        </div>
        <SwatchesPanel />
        <ColorPanel />
        <LayersPanel />
      </aside>
    </div>
  </div>
);

const taskItems = [
  { name: 'Start', cell: 'w-[60px]', art: <svg viewBox="0 0 20 20" className="w-5 h-5"><path d="M0 3L8.500 1.800V9.500H0ZM9.500 1.600L20 0V9.500H9.500ZM0 10.500H8.500V18.200L0 17ZM9.500 10.500H20V20L9.500 18.400Z" fill="#fff" /></svg> },
  { name: 'Search', cell: 'w-[60px]', art: <svg viewBox="0 0 20 20" className="w-5 h-5" fill="none" stroke="#fff" strokeWidth="1.500"><circle cx="12.500" cy="7" r="6" /><path d="M8.500 11.500L0.500 19.500" /></svg> },
  { name: 'Cortana', cell: 'w-[60px]', art: <svg viewBox="0 0 20 20" className="w-5 h-5"><circle cx="10" cy="10" r="8.500" fill="none" stroke="#fff" strokeWidth="2.400" /></svg> },
  { name: 'Task View', cell: 'w-[60px]', art: <svg viewBox="0 0 20 20" className="w-5 h-5" fill="none" stroke="#fff" strokeWidth="1.400"><path d="M1 0V3.500H13V0M1 6.500H13V14H1ZM1 20V17H13V20M17.500 0V4M17.500 11V20" /><path d="M16 6H19V9H16Z" fill="#fff" stroke="none" /></svg> },
  {
    name: 'Edge', cell: 'w-[67px]',
    art: (
      <svg viewBox="0 0 30 30" className="w-[30px] h-[30px]">
        <defs>
          <linearGradient id="edgeA" x1="0" y1="0" x2="1" y2="0.300"><stop stopColor="#2aa7e8" /><stop offset="0.600" stopColor="#32c5c8" /><stop offset="1" stopColor="#5fdc5e" /></linearGradient>
          <linearGradient id="edgeB" x1="0" y1="0" x2="0" y2="1"><stop stopColor="#1a8fdc" /><stop offset="1" stopColor="#1257a8" /></linearGradient>
        </defs>
        <path d="M15 0C24 0 30 6 30 13C30 18 26 20.500 22.500 20.500C18 20.500 17 18.500 18 17C20 14 17 9 11 9C5 9 1 13 0.200 15C0 7 6 0 15 0Z" fill="url(#edgeA)" />
        <path d="M0 15C1 10 6 8 11 8.500C16 9 19 13 17.500 17C17 19 18 21.500 23 21.500C26 21.500 28 20 28.500 20C27 25 22 30 15 30C6 30 0 23 0 15Z" fill="url(#edgeB)" />
        <path d="M11 9C7 14 8 27 19 29.500C24 28 27 24 28.500 20.500C22 24 13 22 13.500 15C13.500 12 14 10.500 15 10.200Q13 9 11 9Z" fill="#114a8b" />
      </svg>
    ),
  },
  {
    name: 'File Explorer', cell: 'w-[59px]',
    art: <svg viewBox="0 0 28 24" className="w-7 h-6"><path d="M0 0H11L13 3H28V10H0Z" fill="#e3a41a" /><path d="M1 4H28V23H1Z" fill="#ffd766" /><path d="M5 24V12Q5 11 6 11H22Q23 11 23 12V24H18V18H10V24Z" fill="#3f92d2" /></svg>,
  },
  {
    name: 'Mail', cell: 'w-[62px]',
    art: <svg viewBox="0 0 30 28" className="w-[30px] h-7"><path d="M0 9L15 0L30 9V14H0Z" fill="#0b5fa8" /><path d="M3 9H27V18H3Z" fill="#fff" /><path d="M0 9L15 18L30 9V28H0Z" fill="#27a3e8" /><path d="M0 28L15 18L30 28Z" fill="#1c8ad4" /></svg>,
  },
  { name: 'Illustrator', cell: 'w-[63px]', bar: 'ml-[7px] mr-[5px] bg-[#7ab3e4]', art: <span className="flex items-center justify-center w-7 h-[27px] border-2 border-[#ff9a28] bg-[#261300] text-[16px] font-semibold leading-none text-[#ff8a10]">Ai</span> },
  {
    name: 'Chrome', cell: 'w-[62px] bg-[#4c4c4c]', bar: 'bg-[#7ab3e4]',
    art: <svg viewBox="0 0 28 28" className="w-7 h-7"><circle cx="14" cy="14" r="14" fill="#fbc116" /><path d="M14 14L1.900 7A14 14 0 0 0 14 28L20 17.500Z" fill="#1ea362" /><path d="M2 7.200A14 14 0 0 1 26.100 7H14Z" fill="#dc4a3d" /><circle cx="14" cy="14" r="6.500" fill="#fff" /><circle cx="14" cy="14" r="5.200" fill="#4587f3" /></svg>,
  },
  {
    name: 'LINE', cell: 'w-[61px] ml-px bg-[#a7602a]', bar: 'bg-[#ff7a1a]',
    art: <svg viewBox="0 0 30 30" className="w-[30px] h-[30px]"><rect width="30" height="30" rx="5" fill="#00b900" /><path d="M15 5C21 5 26 9 26 14C26 19 19 23 15 26C14.500 25 15 24 14.500 23C9 22.500 4 19 4 14C4 9 9 5 15 5Z" fill="#fff" /><text x="15" y="16.500" textAnchor="middle" fontSize="6.500" fontWeight="bold" fontFamily="Liberation Sans, sans-serif" fill="#00b900">LINE</text></svg>,
  },
];

const Taskbar = () => (
  <div className="flex h-[50px] bg-[#202020] bg-[radial-gradient(ellipse_80px_140px_at_1320px_50%,#3b1a28,transparent),radial-gradient(ellipse_130px_140px_at_1660px_50%,#33202a,transparent)] text-white">
    {taskItems.map((t) => (
      <button key={t.name} aria-label={t.name} className={`flex flex-col ${t.cell}`}>
        <span className="flex-1 flex items-center justify-center w-full">{t.art}</span>
        <span className={`self-stretch h-[3px] ${t.bar || ''}`} />
      </button>
    ))}
    <div className="ml-auto flex items-center">
      <svg viewBox="0 0 28 28" className="w-7 h-7"><circle cx="14" cy="14" r="13" fill="#0d8fd4" stroke="#fff" strokeWidth="2" /><path d="M9.500 11Q9.500 6.500 14 6.500T18.500 10.500Q18.500 13 16 14Q14 15 14 17.500" fill="none" stroke="#fff" strokeWidth="3" /><circle cx="14" cy="21" r="1.800" fill="#fff" /></svg>
      <svg viewBox="0 0 16 10" className="ml-3 w-4 h-[10px]"><path d="M1 9L8 1L15 9" fill="none" stroke="#fff" strokeWidth="1.500" /></svg>
      <svg viewBox="0 0 20 14" className="ml-3 w-5 h-[14px]"><path d="M5 3H18V12H3V8" fill="none" stroke="#fff" strokeWidth="1.400" /><path d="M7 5H12V10.500H7ZM18.500 5H20V10H18.500ZM0 2H6V5Q6 7 3 7Q0 7 0 5ZM1 0H2V2H1ZM4 0H5V2H4Z" fill="#fff" /></svg>
      <svg viewBox="0 0 16 16" className="ml-[13px] w-4 h-4" fill="none" strokeWidth="1.300"><path d="M1 15A14 14 0 0 1 15 1M5 15A10 10 0 0 1 15 5" stroke="#888" /><path d="M8.500 15A6.500 6.500 0 0 1 15 8.500" stroke="#fff" /><circle cx="13.500" cy="13.500" r="1.600" fill="#fff" /></svg>
      <svg viewBox="0 0 20 16" className="ml-[10px] w-5 h-4" fill="none" stroke="#fff" strokeWidth="1.300"><path d="M1 5.500H4L8 2V14L4 10.500H1ZM11 5.500Q12.500 8 11 10.500M13.500 3.500Q16 8 13.500 12.500" /><path d="M16 1.500Q20 8 16 14.500" stroke="#888" /></svg>
      <div className="ml-[13px] w-[76px] text-center text-[14px] leading-[22px] whitespace-nowrap pb-px">
        <p>19:34</p>
        <p>17/11/2020</p>
      </div>
      <div className="relative ml-[22px] mr-4 w-[32px] h-[34px]">
        <svg viewBox="0 0 32 34" className="w-full h-full"><path d="M1 2H22V19H14L10 23V19H1Z" fill="#fff" /><path d="M5 7H18M5 11H18M5 15H12" stroke="#202020" strokeWidth="1.300" /><circle cx="21" cy="23" r="9.500" fill="#2b2b2b" stroke="#888" /></svg>
        <span className="absolute left-[17px] top-[13px] text-[14px] leading-5">1</span>
      </div>
      <span className="mr-1 w-px h-[50px] bg-[#6a6a6a]" />
    </div>
  </div>
);

export default function App() {
  return (
    <div className="min-h-screen flex flex-col font-['Open_Sans','Noto_Sans',sans-serif]">
      <TabStrip />
      <Toolbar />
      <Bookmarks />
      <main className="flex-1 flex px-[259px] bg-[#0d0d0d] border-t-2 border-[#d6d6d6]">
        <Illustrator />
      </main>
      <Taskbar />
    </div>
  );
}
